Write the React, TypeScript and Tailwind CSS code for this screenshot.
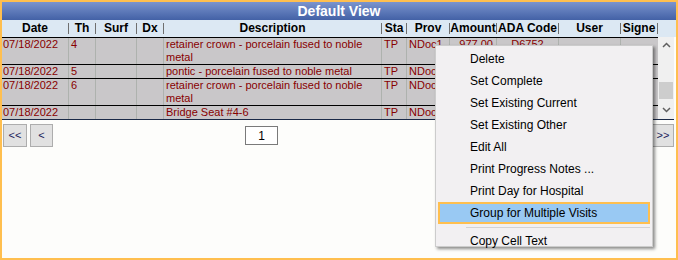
import React from 'react';

const columns = [
  { key: 'date', label: 'Date', w: 'w-[67px]' },
  { key: 'th', label: 'Th', w: 'w-[27px]' },
  { key: 'surf', label: 'Surf', w: 'w-[41px]' },
  { key: 'dx', label: 'Dx', w: 'w-[27px]' },
  { key: 'desc', label: 'Description', w: 'w-[218px]' },
  { key: 'sta', label: 'Sta', w: 'w-[25px]' },
  { key: 'prov', label: 'Prov', w: 'w-[43px]' },
  { key: 'amount', label: 'Amount', w: 'w-[47px]' },
  { key: 'ada', label: 'ADA Code', w: 'w-[62px]' },
  { key: 'user', label: 'User', w: 'w-[62px]' },
  { key: 'signe', label: 'Signe', w: 'w-[37px]' },
];

// amount / code of the lower rows sit under the context menu, so they are left blank
const rows = [
  {
    date: '07/18/2022',
    th: '4',
    desc: 'retainer crown - porcelain fused to noble metal',
    sta: 'TP',
    prov: 'NDoc1',
    amount: '977.00',
    ada: 'D6752',
    h: 'h-[27px]',
  },
  { date: '07/18/2022', th: '5', desc: 'pontic - porcelain fused to noble metal', sta: 'TP', prov: 'NDoc1', amount: '', ada: '', h: 'h-[14px]' },
  {
    date: '07/18/2022',
    th: '6',
    desc: 'retainer crown - porcelain fused to noble metal',
    sta: 'TP',
    prov: 'NDoc1',
    amount: '',
    ada: '',
    h: 'h-[27px]',
  },
  { date: '07/18/2022', th: '', desc: 'Bridge Seat #4-6', sta: 'TP', prov: 'NDoc1', amount: '', ada: '', h: 'h-[14px]' },
];

const menuItems = [
  'Delete',
  'Set Complete',
  'Set Existing Current',
  'Set Existing Other',
  'Edit All',
  'Print Progress Notes ...',
  'Print Day for Hospital',
];

const Chevron = ({ up }: { up?: boolean }) => (
  <svg width="9" height="6" viewBox="0 0 9 6" className={up ? '' : 'rotate-180'}>
    <path d="M1 5 L4.5 1.5 L8 5" fill="none" stroke="#606060" strokeWidth="1.5" />
  </svg>
);

const App = () => {
  return (
    <div className="w-[678px] h-[260px] bg-[#ffbf4f] p-[2px] font-['Liberation_Sans',Arial,sans-serif] overflow-hidden">
      <div className="relative h-full bg-[#fdfdfb] flex flex-col">
        {/* title */}
        <div className="h-[18px] bg-gradient-to-b from-[#7b94cd] to-[#4361a6] text-white font-bold text-[14px] leading-[18px] text-center">
          Default View
        </div>

        {/* header */}
        <div className="h-[17px] bg-[#dce8f3] flex items-center text-[12px] font-bold text-black">
          {columns.map((c) => (
            <div key={c.key} className={`${c.w} flex items-center h-full`}>
              <div className="flex-1 text-center leading-[13px] whitespace-nowrap overflow-hidden">{c.label}</div>
              <div className="w-px h-[11px] bg-[#6f6f6f]" />
            </div>
          ))}
        </div>

        {/* grid body */}
        <div className="flex pr-[2px]">
          <div className="w-[656px] border-b border-[#1b2a48]">
            {rows.map((r, i) => (
              <div key={i} className={`${r.h} flex border-t border-black bg-[#c9c7c9] text-[11px] leading-[13px] text-[#880000]`}>
                <div className="w-[67px] border-r border-[#aeb2ae] pl-[1px]">{r.date}</div>
                <div className="w-[27px] border-r border-[#aeb2ae] pl-[2px]">{r.th}</div>
                <div className="w-[41px] border-r border-[#aeb2ae]" />
                <div className="w-[27px] border-r border-[#aeb2ae]" />
                <div className="w-[218px] border-r border-[#aeb2ae] pl-[2px]">{r.desc}</div>
                <div className="w-[25px] border-r border-[#aeb2ae] pl-[2px]">{r.sta}</div>
                <div className="w-[43px] border-r border-[#aeb2ae] pl-[2px] whitespace-nowrap overflow-hidden">{r.prov}</div>
                <div className="w-[47px] border-r border-[#aeb2ae] pr-[3px] text-right">{r.amount}</div>
                <div className="w-[62px] border-r border-[#aeb2ae] text-center">{r.ada}</div>
                <div className="w-[62px] border-r border-[#aeb2ae]" />
                <div className="w-[37px]" />
              </div>
            ))}
          </div>
          <div className="w-[16px] bg-[#f0f0f0] border-b border-[#1b2a48] flex flex-col items-center">
            <div className="h-[14px] flex items-center justify-center mt-[1px]">
              <Chevron up />
            </div>
            <div className="flex-1 w-full flex flex-col justify-end px-[1px] pb-[4px]">
              <div className="h-[17px] bg-[#cdcdcd]" />
            </div>
            <div className="h-[14px] flex items-center justify-center mb-[2px]">
              <Chevron />
            </div>
          </div>
        </div>

        {/* pager */}
        <div className="flex items-start mt-[4px] pl-[1px] pr-[2px] text-[11px] text-[#1c1c5a]">
          <div className="w-[24px] h-[23px] bg-[#e1e1e1] border border-[#adadad] flex items-center justify-center">&lt;&lt;</div>
          <div className="w-[23px] h-[23px] ml-[3px] bg-[#e1e1e1] border border-[#adadad] flex items-center justify-center">&lt;</div>
          <div className="w-[33px] h-[19px] ml-[192px] mt-[2px] bg-white border border-[#7a7a7a] flex items-center justify-center text-black text-[12px]">
            1
          </div>
          <div className="flex-1" />
          <div className="w-[23px] h-[23px] bg-[#e1e1e1] border border-[#adadad]" />
          <div className="w-[22px] h-[23px] ml-[3px] bg-[#e1e1e1] border border-[#adadad] flex items-center justify-center">&gt;&gt;</div>
        </div>

        {/* context menu */}
        <div className="absolute left-[433px] top-[43px] w-[218px] h-[202px] bg-[#f2f0f2] border border-[#cccccc] shadow-[2px_2px_3px_rgba(0,0,0,0.45)] pt-[2px] px-[2px] text-[12px] text-black">
          {menuItems.map((m) => (
            <div key={m} className="h-[22px] flex items-center pl-[32px] leading-[14px] whitespace-nowrap">
              {m}
            </div>
          ))}
          <div className="h-[22px] flex items-center pl-[30px] leading-[14px] bg-[#99c9f3] border-2 border-[#ffbf4f] whitespace-nowrap">
            Group for Multiple Visits
          </div>
          <div className="h-[6px] flex items-center pl-[28px]">
            <div className="h-px w-full bg-[#d3d3d3]" />
          </div>
          <div className="h-[17px] flex items-center pl-[32px] pt-[4px] leading-[14px] whitespace-nowrap">Copy Cell Text</div>
        </div>
      </div>
    </div>
  );
};

export default App;
